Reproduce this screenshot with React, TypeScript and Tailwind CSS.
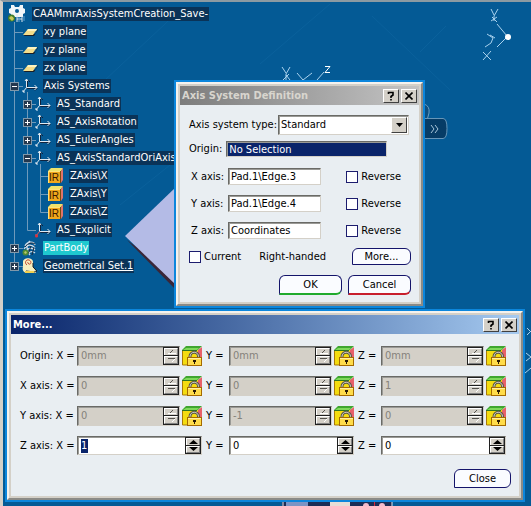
import type { ReactNode } from "react";

type IconKind = "root" | "plane" | "axis" | "axisRed" | "rule" | "body" | "set";

type TreeNode = {
  label: string;
  level: 0 | 1 | 2 | 3;
  icon: IconKind;
  expander?: "plus" | "minus";
  tone?: "active" | "underlined";
};

const nodes: TreeNode[] = [
  { label: "CAAMmrAxisSystemCreation_Save-", level: 0, icon: "root" },
  { label: "xy plane", level: 1, icon: "plane" },
  { label: "yz plane", level: 1, icon: "plane" },
  { label: "zx plane", level: 1, icon: "plane" },
  { label: "Axis Systems", level: 1, icon: "axis", expander: "minus" },
  { label: "AS_Standard", level: 2, icon: "axis", expander: "plus" },
  { label: "AS_AxisRotation", level: 2, icon: "axis", expander: "plus" },
  { label: "AS_EulerAngles", level: 2, icon: "axis", expander: "plus" },
  { label: "AS_AxisStandardOriAxisD", level: 2, icon: "axis", expander: "minus" },
  { label: "ZAxis\\X", level: 3, icon: "rule" },
  { label: "ZAxis\\Y", level: 3, icon: "rule" },
  { label: "ZAxis\\Z", level: 3, icon: "rule" },
  { label: "AS_Explicit", level: 2, icon: "axisRed" },
  { label: "PartBody", level: 1, icon: "body", expander: "plus", tone: "active" },
  { label: "Geometrical Set.1", level: 1, icon: "set", expander: "plus", tone: "underlined" },
];

const indents = ["pl-1", "pl-[7px]", "pl-5", "pl-[33px]"];

function TreeIcon({ kind }: { kind: IconKind }) {
  if (kind === "root") {
    return (
      <svg className="h-[18px] w-5 shrink-0" viewBox="0 0 20 18" fill="none">
        <path d="M4 0h3l1 2h4l1-2h3v3l2 1v4l-2 1v3H4V9L2 8V4l2-1z" fill="#f2f6f8" />
        <circle cx="10" cy="6" r="2" fill="#075c96" />
        <circle cx="4.5" cy="13" r="3.5" fill="#3f7d2a" />
        <path d="M2 13l2-2 2 1 1 2-2 2z" fill="#c9c95a" />
        <path d="M10 17V9M10 14h5M15 17v-6" stroke="#d9e6ee" />
        <path d="M12 17v-5M17 16v-5" stroke="#5f9fd0" />
      </svg>
    );
  }
  if (kind === "plane") {
    return (
      <svg className="size-4 shrink-0" viewBox="0 0 16 16">
        <path d="M2 12h10l4-6v-1l-3 5H3z" fill="#1b1f26" />
        <path d="M6 5h9l-4 6H1z" fill="#f3dd8b" />
        <path d="M6 5h9l-1 2H5z" fill="#fdf3bf" />
      </svg>
    );
  }
  if (kind === "axis" || kind === "axisRed") {
    return (
      <svg className="size-4 shrink-0" viewBox="0 0 16 16" fill="none">
        <path d="M5.500 2v8.500H15M13 8.500l2 2-2 2M4 4l2-2 2 2" stroke="#10233c" />
        <path d="M4.500 1v8.500H15M12.500 7l2.500 2.500-2.500 2.500M3 3l1.500-2L6 3" stroke="#dfeaf2" />
        <path d="M4.500 9.500L1 14M1 12v2h2" stroke={kind === "axisRed" ? "#e0525e" : "#dfeaf2"} />
        {kind === "axisRed" && <circle cx="1.500" cy="14" r="1.500" fill="#d8323c" />}
      </svg>
    );
  }
  if (kind === "rule") {
    return (
      <svg className="size-4 shrink-0" viewBox="0 0 16 16">
        <path d="M0 3l3-3h12l-2 3z" fill="#efe36b" />
        <path d="M13 3l2-3v12l-2 3z" fill="#e0756a" />
        <rect y="3" width="12" height="12" fill="#f0a81c" />
        <path d="M0 3h12v1H1v11H0z" fill="#ffe27a" />
        <rect x="12" y="3" width="1" height="12" fill="#7a4a10" />
        <text x="1" y="13" fontSize="10" fontFamily="Liberation Sans, sans-serif" fill="#3a1a00">IR</text>
      </svg>
    );
  }
  if (kind === "body") {
    return (
      <svg className="size-4 shrink-0" viewBox="0 0 16 16" fill="none">
        <path d="M3 6c2-5 9-5 10-1M2 9c3-5 8-5 11-1M4 11c3-4 7-3 9-1M6 14c2-3 5-3 7-1M8 1C4 4 4 10 8 15" stroke="#cfdde8" strokeWidth="1.300" />
        <path d="M3 7c3-4 7-5 10-3M9 6l-3 8M12 7l-2 8" stroke="#17293f" />
        <circle cx="3.500" cy="12.500" r="3" fill="#4e8a35" />
        <path d="M2 12l2-1 1 2-2 1z" fill="#b9c867" />
      </svg>
    );
  }
  return (
    <svg className="size-4 shrink-0" viewBox="0 0 16 16" fill="none">
      <path d="M1 4c0-5 10-5 10 0v5l3 4v2H4c-3-1-4-4-3-6z" fill="#f7efc0" />
      <path d="M11 5v4l4 4-2 1-9-1" stroke="#1b1f26" />
      <path d="M5 7C2 5 4 1 7 2s2 5 0 4-1-2-1-2" stroke="#c0442c" />
      <path d="M3 14h9" stroke="#f1cf4f" strokeWidth="2" />
    </svg>
  );
}

function Expander({ kind }: { kind: "plus" | "minus" }) {
  return (
    <button type="button" aria-label={kind === "plus" ? "Expand" : "Collapse"} className="block size-[9px]">
      <svg className="size-[9px]" viewBox="0 0 9 9">
        <rect x="0.500" y="0.500" width="8" height="8" fill="#24384e" stroke="#8098aa" />
        <path d="M2 4h5v1H2z" fill="#fff" />
        {kind === "plus" && <path d="M4 2h1v5H4z" fill="#fff" />}
      </svg>
    </button>
  );
}

function Tree() {
  return (
    <nav aria-label="Specification tree" className="relative w-fit pt-[3px]">
      <svg className="absolute top-0 left-0 h-[280px] w-14" viewBox="0 0 56 280" fill="none">
        <path
          d="M11.500 20V264.500M11.500 30.500H20M11.500 48.500H20M11.500 66.500H20M11.500 84.500H20M11.500 246.500H20M11.500 264.500H20M24.500 90V228.500H33M24.500 102.500H33M24.500 120.500H33M24.500 138.500H33M24.500 156.500H33M37.500 162V210.500H46M37.500 174.500H46M37.500 192.500H46"
          stroke="#6f9abb"
        />
      </svg>
      <ul className="relative">
        {nodes.map((n) => (
          <li key={n.label} className={`flex h-[18px] items-center ${indents[n.level]}`}>
            {n.level > 0 && (
              <span className="mr-[3px] w-[9px] shrink-0">{n.expander && <Expander kind={n.expander} />}</span>
            )}
            <TreeIcon kind={n.icon} />
            <span
              className={`ml-[5px] px-px leading-[14px] whitespace-nowrap text-white ${
                n.tone === "active" ? "bg-[#1fc9cf]" : "bg-[#0a3358]"
              } ${n.tone === "underlined" ? "underline" : ""}`}
            >
              {n.label}
            </span>
          </li>
        ))}
      </ul>
    </nav>
  );
}

function Scene() {
  return (
    <svg className="absolute top-0 left-0 h-[504px] w-[528px]" viewBox="3 2 528 504" fill="none">
      <path d="M260 64L330 4M372 16L450 90M420 52L446 26M105 80L180 10M120 205L170 165" stroke="#0a619c" />
      <path d="M127 240L176 290V276z" fill="#3a2638" />
      <path d="M125 236L176 187V285z" fill="#b4bbe6" />
      <g stroke="#a9d2ee">
        <path d="M282 67l4 6M290 67l-4 7v6M283 80l6-6M286 75l4 5M297 73l6 7M303 80l9-7M317 80l7-8" />
        <path d="M491 9l3 6M498 9l-4 7v5M491 21l6-4M492 17l5 5M497 24l10 12M507 37l-10 10M487 34l6 4-2 5-6 4M490 35l5 3M483 52l8 8M491 51l-8 9" />
        <path d="M527 328l4 4M527 335l4-4M526 353l5 4-5 4M525 373l6-5" />
      </g>
      <path d="M325 66.500h5l-5 6h5" stroke="#fff" />
      <circle cx="508" cy="37" r="3" fill="#fff" />
      <path d="M424 104q6 2 5 9t-4 8h-2V104z" fill="#0d4f80" stroke="#6d9fc2" />
      <path d="M423 118.500h20q4 0 4 10t-4 10h-20z" fill="#063c66" stroke="#6796b8" />
      <path d="M431 125l3 4-3 4M435 125l3 4-3 4" stroke="#a9c6da" />
      <rect x="282" y="500" width="110" height="6" fill="#1c2d55" />
      <rect x="286" y="500" width="22" height="6" fill="#7c94c4" />
      <rect x="330" y="500" width="20" height="6" fill="#e6ddd6" />
      <circle cx="366" cy="506" r="3" fill="#f3bccd" />
      <circle cx="382" cy="506" r="3" fill="#f3bccd" />
      <path d="M374.500 500v6" stroke="#d42a3b" />
      <path d="M283 500v6M392 500v6" stroke="#dfe8f2" />
    </svg>
  );
}

function CaptionButton({ label, children }: { label: string; children: ReactNode }) {
  return (
    <button
      type="button"
      aria-label={label}
      className="flex h-[14px] w-4 items-center justify-center border border-t-white border-r-[#404040] border-b-[#404040] border-l-white bg-[#d4d0c8] text-black"
    >
      {children}
    </button>
  );
}

function Dialog({
  title,
  active,
  place,
  children,
}: {
  title: string;
  active: boolean;
  place: string;
  children: ReactNode;
}) {
  const bar = active
    ? "bg-linear-to-r from-[#0a246a] to-[#a6caf0] text-white"
    : "bg-linear-to-r from-[#7d7d7d] to-[#c4c4c4] text-[#d8d5ce]";
  return (
    <section
      aria-label={title}
      className={`absolute border-2 border-t-[#f4f2ee] border-r-[#8b8a86] border-b-[#8b8a86] border-l-[#f4f2ee] bg-[#d4d0c8] p-[2px] shadow-[0_0_0_2px_#0c86dc] ${place}`}
    >
      <header className={`flex h-[19px] items-center gap-[2px] px-[2px] ${bar}`}>
        <h2 className="flex-1 font-bold">{title}</h2>
        <CaptionButton label="Help">
          <svg className="h-[10px] w-2" viewBox="0 0 8 10" fill="none">
            <path d="M1.500 3V1.500h4.500V4L4 5.500V7M4 8v1.500" stroke="#000" strokeWidth="1.600" />
          </svg>
        </CaptionButton>
        <CaptionButton label="Close window">
          <svg className="size-2" viewBox="0 0 8 8" fill="none">
            <path d="M0.500 0.500l7 7M7.500 0.500l-7 7" stroke="#000" strokeWidth="1.600" />
          </svg>
        </CaptionButton>
      </header>
      {children}
    </section>
  );
}

const sunken = "border border-t-[#6a6a66] border-r-[#d4d0c8] border-b-[#d4d0c8] border-l-[#6a6a66] shadow-[inset_1px_1px_0_#9a9a96]";

const accents = {
  none: "border-b-[#14146a]",
  ok: "border-b-2 border-b-[#1faa2c]",
  cancel: "border-b-2 border-b-[#c81e2c]",
};

function PushButton({ label, accent, size }: { label: string; accent: keyof typeof accents; size: string }) {
  return (
    <button
      type="button"
      className={`flex items-center justify-center rounded-[6px] rounded-bl-none border border-[#14146a] bg-[#fafcff] ${accents[accent]} ${size}`}
    >
      {label}
    </button>
  );
}

function Check({ label }: { label: string }) {
  return (
    <label className="flex items-center gap-[3px]">
      <input type="checkbox" className="size-3 appearance-none border border-[#1c1c6e] bg-white" />
      {label}
    </label>
  );
}

const axisRows = [
  { name: "X axis:", value: "Pad.1\\Edge.3" },
  { name: "Y axis:", value: "Pad.1\\Edge.4" },
  { name: "Z axis:", value: "Coordinates" },
];

function DefinitionDialog() {
  return (
    <Dialog title="Axis System Definition" active={false} place="top-[80px] left-[173px] w-[247px]">
      <form className="bg-[#e9eef2] pt-[10px] pr-2 pb-[7px] pl-[9px]">
        <div className="flex items-center justify-between pr-[2px]">
          <label htmlFor="type">Axis system type:</label>
          <div className={`flex h-5 w-[131px] bg-white ${sunken}`}>
            <div className="relative flex flex-1">
              <select id="type" className="w-full appearance-none pl-[2px] outline-none">
                <option>Standard</option>
              </select>
              <span className="pointer-events-none absolute inset-y-px right-px flex w-4 items-center justify-center border border-t-white border-r-[#404040] border-b-[#404040] border-l-white bg-[#d4d0c8]">
                <svg className="h-1 w-[7px]" viewBox="0 0 7 4">
                  <path d="M0 0h7L3.500 4z" />
                </svg>
              </span>
            </div>
          </div>
        </div>
        <div className="mt-[6px] flex items-center gap-1 pr-6">
          <label htmlFor="origin">Origin:</label>
          <input
            id="origin"
            readOnly
            defaultValue="No Selection"
            className={`h-4 min-w-0 flex-1 bg-[#0a246a] px-[2px] text-white outline-none ${sunken}`}
          />
        </div>
        <div className="mt-[11px] flex flex-col gap-[10px] pl-[2px]">
          {axisRows.map((row) => (
            <div key={row.name} className="flex items-center">
              <label htmlFor={row.name} className="w-[37px]">
                {row.name}
              </label>
              <input
                id={row.name}
                defaultValue={row.value}
                className={`h-[17px] w-[93px] bg-white px-[2px] outline-none ${sunken}`}
              />
              <span className="ml-auto pr-[10px]">
                <Check label="Reverse" />
              </span>
            </div>
          ))}
        </div>
        <div className="mt-[9px] flex items-center">
          <Check label="Current" />
          <span className="ml-[18px] flex-1">Right-handed</span>
          <PushButton label="More..." accent="none" size="h-[17px] w-[59px]" />
        </div>
        <div className="mt-[10px] flex justify-end gap-[6px]">
          <PushButton label="OK" accent="ok" size="h-5 w-[63px]" />
          <PushButton label="Cancel" accent="cancel" size="h-5 w-[63px]" />
        </div>
      </form>
    </Dialog>
  );
}

function LockIcon() {
  return (
    <svg className="size-5" viewBox="0 0 20 20" fill="none">
      <path d="M0 4l4-4h16l-4 4z" fill="#3fa62f" />
      <path d="M1 4l3-2h13l-2 2z" fill="#7ed85a" />
      <path d="M16 4l4-3v13l-4 2z" fill="#e8606a" />
      <rect y="4" width="16" height="15" fill="#f4dc10" />
      <path d="M0.500 4v15h5" stroke="#a87808" />
      <path d="M0 4.500h15" stroke="#2f7420" />
      <path d="M8 12V10.500a4 4 0 0 1 8.500 0V12" stroke="#5a5648" strokeWidth="3" />
      <path d="M8 12V10.500a4 4 0 0 1 8.500 0V12" stroke="#d6d3c2" />
      <rect x="5.500" y="11.500" width="14" height="8" fill="#ffdc4a" stroke="#a46a00" />
      <path d="M6 12.500h13" stroke="#fff0a0" />
      <path d="M11 14h3v2h-1v2h-1v-2h-1z" fill="#2a1a00" />
    </svg>
  );
}

function Spinner({ enabled }: { enabled: boolean }) {
  const edge = "border border-t-white border-r-[#808080] border-b-[#808080] border-l-white";
  return (
    <span className="flex w-4 shrink-0 flex-col border border-[#202020] bg-[#d4d0c8]">
      <button
        type="button"
        aria-label="Increase"
        disabled={!enabled}
        className={`flex min-h-0 flex-1 items-center justify-center ${edge}`}
      >
        <svg className="h-1 w-[9px]" viewBox="0 0 9 4">
          {enabled ? (
            <path d="M0 4l4.500-4L9 4z" />
          ) : (
            <g>
              <path d="M1 3h8v1H1z" fill="#fff" />
              <path d="M3 3l3-3" stroke="#55534e" />
            </g>
          )}
        </svg>
      </button>
      <button
        type="button"
        aria-label="Decrease"
        disabled={!enabled}
        className={`flex min-h-0 flex-1 items-center justify-center shadow-[0_-1px_0_#202020] ${edge}`}
      >
        <svg className="h-1 w-[9px]" viewBox="0 0 9 4">
          {enabled ? (
            <path d="M0 0l4.500 4L9 0z" />
          ) : (
            <g>
              <path d="M1 0h7v1H1z" fill="#55534e" />
              <path d="M5 4l3-3" stroke="#fff" />
            </g>
          )}
        </svg>
      </button>
    </span>
  );
}

const matrix = [
  { name: "Origin:", locked: true, values: ["0mm", "0mm", "0mm"] },
  { name: "X axis:", locked: true, values: ["0", "0", "1"] },
  { name: "Y axis:", locked: true, values: ["0", "-1", "0"] },
  { name: "Z axis:", locked: false, values: ["1", "0", "0"] },
];

const coords = ["X", "Y", "Z"];

function MoreDialog() {
  return (
    <Dialog title="More..." active place="top-[309px] right-[8px] left-[4px]">
      <form className="bg-[#e9eef2] pt-3 pr-2 pb-2 pl-[9px]">
        <div className="grid grid-cols-[57px_1fr_27px_1fr_27px_1fr] items-center gap-y-[10px] pr-[5px]">
          {matrix.map((row) =>
            row.values.map((value, i) => {
              const id = `${row.name}${coords[i]}`;
              const selected = !row.locked && i === 0;
              return [
                <label key={`${id}-label`} htmlFor={id} className={i > 0 ? "pl-1" : ""}>
                  {i === 0 ? `${row.name} X =` : `${coords[i]} =`}
                </label>,
                <div key={id} className="flex items-center gap-[2px]">
                  <div className={`flex min-w-0 flex-1 ${row.locked ? "h-5 bg-[#d4d0c8]" : "h-[19px] bg-white"} ${sunken}`}>
                    <span className="flex min-w-0 flex-1 items-center pl-[3px]">
                      <input
                        id={id}
                        defaultValue={value}
                        disabled={row.locked}
                        className={`h-[14px] outline-none ${
                          selected ? "w-[7px] bg-[#0a246a] text-white" : "w-full bg-transparent"
                        } ${row.locked ? "text-[#85827b]" : ""}`}
                      />
                    </span>
                    <Spinner enabled={!row.locked} />
                  </div>
                  {row.locked && (
                    <button type="button" aria-label={`Unlock ${id}`}>
                      <LockIcon />
                    </button>
                  )}
                </div>,
              ];
            }),
          )}
        </div>
        <div className="mt-[14px] flex justify-end">
          <PushButton label="Close" accent="none" size="h-[19px] w-[57px]" />
        </div>
      </form>
    </Dialog>
  );
}

export default function App() {
  return (
    <main className="relative min-h-screen overflow-hidden border-t-2 border-l-[3px] border-t-[#8c9aa2] border-l-[#d4d0c8] bg-[#045a95] font-['DejaVu_Sans_Condensed','DejaVu_Sans',sans-serif] text-[11px] leading-[14px] text-black">
      <Scene />
      <Tree />
      <DefinitionDialog />
      <MoreDialog />
    </main>
  );
}
